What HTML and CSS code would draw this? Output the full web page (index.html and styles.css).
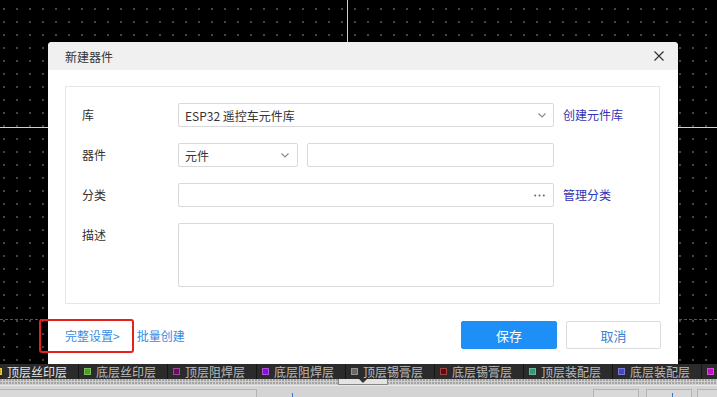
FILE: index.html
```html
<!DOCTYPE html>
<html lang="zh">
<head>
<meta charset="utf-8">
<title>新建器件</title>
<link rel="stylesheet" href="styles.css">
</head>
<body>
<div class="canvas">
  <div class="vline"></div>
  <div class="hline"></div>
  <div class="dline"></div>

  <div class="dialog">
    <div class="dlg-head">
      <span class="dlg-title">新建器件</span>
      <svg class="close" width="10" height="10" viewBox="0 0 10 10"><path d="M0.5 0.5L9.5 9.5M9.5 0.5L0.5 9.5" stroke="#333" stroke-width="1.2" fill="none"/></svg>
    </div>
    <div class="dlg-body">
      <div class="panel">
        <div class="form">
          <div class="label">库</div>
          <div class="field select">
            <span>ESP32 遥控车元件库</span>
            <svg class="chev" width="8" height="5" viewBox="0 0 8 5"><path d="M0.5 0.5L4 4L7.5 0.5" stroke="#888" stroke-width="1.1" fill="none"/></svg>
          </div>
          <a class="side-link">创建元件库</a>

          <div class="label">器件</div>
          <div class="pair">
            <div class="field select small">
              <span>元件</span>
              <svg class="chev" width="8" height="5" viewBox="0 0 8 5"><path d="M0.5 0.5L4 4L7.5 0.5" stroke="#888" stroke-width="1.1" fill="none"/></svg>
            </div>
            <div class="field grow"></div>
          </div>
          <span></span>

          <div class="label">分类</div>
          <div class="field select">
            <span></span>
            <svg class="more" width="11" height="3" viewBox="0 0 11 3"><circle cx="1.2" cy="1.5" r="1" fill="#666"/><circle cx="5.5" cy="1.5" r="1" fill="#666"/><circle cx="9.8" cy="1.5" r="1" fill="#666"/></svg>
          </div>
          <a class="side-link">管理分类</a>

          <div class="label">描述</div>
          <div class="field area"></div>
          <span></span>
        </div>
      </div>
    </div>
    <div class="dlg-foot">
      <div class="foot-links">
        <a class="link-light mark">完整设置&gt;</a>
        <a class="link-light">批量创建</a>
      </div>
      <div class="buttons">
        <button class="btn primary">保存</button>
        <button class="btn">取消</button>
      </div>
    </div>
  </div>
</div>

<div class="layerbar">
  <div class="layer active"><i class="sq" style="background:#d7b400"></i><span>顶层丝印层</span></div>
  <div class="layer"><i class="sq" style="background:#4aa020"></i><span>底层丝印层</span></div>
  <div class="layer"><i class="sq" style="background:#6c0a66"></i><span>顶层阻焊层</span></div>
  <div class="layer"><i class="sq" style="background:#8a10d4"></i><span>底层阻焊层</span></div>
  <div class="layer"><i class="sq" style="background:#686868"></i><span>顶层锡膏层</span></div>
  <div class="layer"><i class="sq" style="background:#700404"></i><span>底层锡膏层</span></div>
  <div class="layer"><i class="sq" style="background:#2e9c78"></i><span>顶层装配层</span></div>
  <div class="layer"><i class="sq" style="background:#4646cc"></i><span>底层装配层</span></div>
  <div class="layer last"><i class="sq" style="background:#c010c8"></i></div>
</div>

<div class="bottom">
  <div class="dotted">
    <div class="handle"><svg width="8" height="4" viewBox="0 0 8 4"><path d="M0 0H8L4 4Z" fill="#333"/></svg></div>
  </div>
  <div class="tools">
    <div class="box wide"><i class="tick t1"></i></div>
    <div class="spacer"></div>
    <div class="box b2"></div>
    <div class="box b3"><i class="tick"></i></div>
    <div class="box b4"></div>
  </div>
</div>
</body>
</html>
```

FILE: styles.css
```css
* { box-sizing: border-box; }

body {
  margin: 0;
  width: 717px;
  height: 397px;
  overflow: hidden;
  font-family: "Noto Sans CJK SC", "Noto Sans", sans-serif;
  font-size: 12px;
  display: flex;
  flex-direction: column;
  background: #d4d4d4;
}

.canvas {
  position: relative;
  height: 364px;
  flex: none;
  background-color: #000;
  background-image: radial-gradient(circle at 1px 1px, #7c7c7c 0.55px, transparent 0.9px);
  background-size: 13px 13px;
  background-position: 3px 8px;
}

.vline {
  position: absolute;
  left: 347px;
  top: 0;
  width: 1px;
  height: 100%;
  background: #cfcfcf;
}

.hline {
  position: absolute;
  left: 0;
  right: 0;
  top: 127px;
  height: 1px;
  background: #cfcfcf;
}

.dline {
  position: absolute;
  left: 0;
  right: 0;
  top: 319px;
  border-top: 1px dashed #3d6452;
}

.dialog {
  position: absolute;
  left: 48px;
  top: 42px;
  width: 630px;
  height: 322px;
  background: #fff;
  border-radius: 4px 4px 0 0;
  display: flex;
  flex-direction: column;
  color: #333;
}

.dlg-head {
  height: 28px;
  flex: none;
  background: #f0f0f0;
  border-radius: 4px 4px 0 0;
  display: flex;
  align-items: center;
  justify-content: space-between;
  padding: 0 14px 0 17px;
}

.dlg-title {
  font-size: 12px;
  color: #333;
}

.dlg-body {
  padding: 16px 18px 0 17px;
}

.panel {
  height: 218px;
  border: 1px solid #e6e6e6;
  padding: 16px 0 0 16px;
}

.form {
  display: grid;
  grid-template-columns: 87px 376px auto;
  grid-template-rows: 24px 24px 24px 64px;
  row-gap: 16px;
  column-gap: 9px;
}

.form .label {
  line-height: 24px;
  color: #333;
}

.field {
  border: 1px solid #d9d9d9;
  border-radius: 2px;
  height: 24px;
  background: #fff;
}

.select {
  display: flex;
  align-items: center;
  justify-content: space-between;
  padding: 0 7px 0 6px;
  color: #333;
}

.chev { display: block; }

.more { display: block; margin-right: 1px; }

.pair {
  display: flex;
  gap: 9px;
}

.small { width: 120px; flex: none; padding-right: 8px; }
.grow { flex: 1; }

.area { height: 64px; }

.side-link {
  line-height: 24px;
  color: #3232b4;
  white-space: nowrap;
}

.dlg-foot {
  position: relative;
  margin-top: 17px;
  height: 28px;
  padding: 0 17px;
  display: flex;
  align-items: center;
  justify-content: space-between;
}

.foot-links {
  display: flex;
  gap: 17px;
}

.link-light {
  color: #3a8ce4;
  white-space: nowrap;
}

.mark {
  position: relative;
}

.mark::after {
  content: "";
  position: absolute;
  left: -26px;
  top: -8px;
  width: 91px;
  height: 30px;
  border: 2px solid #e3221b;
  border-radius: 3px;
}

.buttons {
  display: flex;
  gap: 9px;
}

.btn {
  width: 95px;
  height: 28px;
  border: 1px solid #dcdcdc;
  border-radius: 2px;
  background: #fff;
  color: #3b80d4;
  font-family: inherit;
  font-size: 13px;
  padding: 0;
}

.btn.primary {
  width: 96px;
  background: #1d8ff6;
  border-color: #1d8ff6;
  color: #fff;
}

.layerbar {
  height: 15px;
  flex: none;
  background: #2b2b2b;
  display: flex;
  margin-left: -11px;
  width: 728px;
}

.layer {
  flex: none;
  width: 89px;
  display: flex;
  align-items: center;
  border-left: 1px solid #161616;
  padding-left: 5px;
  gap: 5px;
  color: #bcbcbc;
  font-size: 12px;
  line-height: 15px;
  white-space: nowrap;
}

.layer.last { width: 16px; }

.layer.active { color: #e6e6e6; }

.sq {
  width: 7px;
  height: 7px;
  flex: none;
  border: 1px solid rgba(255, 255, 255, 0.28);
}

.bottom {
  flex: 1;
  display: flex;
  flex-direction: column;
  background: #d4d4d4;
}

.dotted {
  height: 7px;
  flex: none;
  background-color: #cfcfcf;
  background-image: radial-gradient(circle at 1px 1px, #a4a4a4 0.8px, transparent 1px);
  background-size: 3px 3px;
  border-bottom: 1px solid #e8e8e8;
  position: relative;
}

.handle {
  position: absolute;
  left: 338px;
  top: 0;
  width: 50px;
  height: 6px;
  background: #e4e4e4;
  border: 1px solid #888;
  border-top: none;
  display: flex;
  justify-content: center;
  align-items: flex-start;
}

.handle svg { display: block; }

.tools {
  flex: 1;
  display: flex;
  padding-top: 3px;
}

.box {
  border: 1px solid #b4b4b4;
  border-bottom: none;
  background: #d9d9d9;
  position: relative;
}

.wide { width: 257px; border-left: none; }
.spacer { flex: 1; }
.b2 { width: 46px; margin-right: 7px; }
.b3 { width: 46px; margin-right: 5px; }
.b4 { width: 20px; border-right: none; }

.tick {
  position: absolute;
  top: 3px;
  left: 25px;
  width: 1px;
  height: 4px;
  background: #3a78d0;
}

.t1 { left: auto; right: -37px; }
```
